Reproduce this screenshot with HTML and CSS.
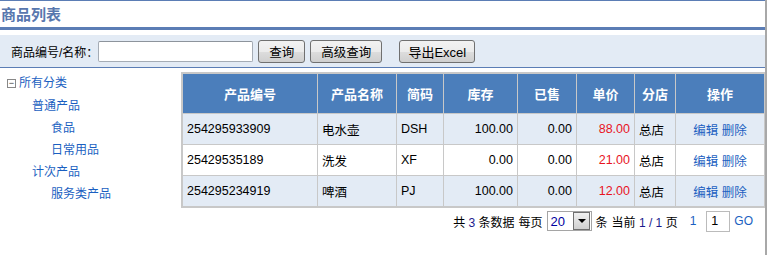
FILE: index.html
```html
<!DOCTYPE html>
<html lang="zh">
<head>
    <meta charset="UTF-8">
    <title>商品列表</title>
    <link rel="stylesheet" href="styles.css">
</head>
<body>
<div class="page">
    <div class="title-bar">
        <h1>商品列表</h1>
    </div>

    <div class="toolbar">
        <label for="keyword">商品编号/名称：</label>
        <input id="keyword" type="text">
        <button>查询</button>
        <button>高级查询</button>
        <button class="export">导出Excel</button>
    </div>

    <div class="content">
        <ul class="tree">
            <li class="root"><span class="toggle">−</span><a href="#">所有分类</a></li>
            <li class="lv1"><a href="#">普通产品</a></li>
            <li class="lv2"><a href="#">食品</a></li>
            <li class="lv2"><a href="#">日常用品</a></li>
            <li class="lv1"><a href="#">计次产品</a></li>
            <li class="lv2"><a href="#">服务类产品</a></li>
        </ul>

        <div class="main">
            <table class="grid">
                <thead>
                    <tr>
                        <th class="c-no">产品编号</th>
                        <th class="c-name">产品名称</th>
                        <th class="c-code">简码</th>
                        <th class="c-stock">库存</th>
                        <th class="c-sold">已售</th>
                        <th class="c-price">单价</th>
                        <th class="c-shop">分店</th>
                        <th class="c-op">操作</th>
                    </tr>
                </thead>
                <tbody>
                    <tr>
                        <td>254295933909</td>
                        <td>电水壶</td>
                        <td>DSH</td>
                        <td class="num">100.00</td>
                        <td class="num">0.00</td>
                        <td class="num price">88.00</td>
                        <td>总店</td>
                        <td class="ops"><a href="#">编辑</a> <a href="#">删除</a></td>
                    </tr>
                    <tr>
                        <td>25429535189</td>
                        <td>洗发</td>
                        <td>XF</td>
                        <td class="num">0.00</td>
                        <td class="num">0.00</td>
                        <td class="num price">21.00</td>
                        <td>总店</td>
                        <td class="ops"><a href="#">编辑</a> <a href="#">删除</a></td>
                    </tr>
                    <tr>
                        <td>254295234919</td>
                        <td>啤酒</td>
                        <td>PJ</td>
                        <td class="num">100.00</td>
                        <td class="num">0.00</td>
                        <td class="num price">12.00</td>
                        <td>总店</td>
                        <td class="ops"><a href="#">编辑</a> <a href="#">删除</a></td>
                    </tr>
                </tbody>
            </table>

            <div class="pager">
                <span>共 <b>3</b> 条数据</span>
                <span>每页</span>
                <span class="select"><span class="val">20</span><span class="arrow"></span></span>
                <span>条</span>
                <span>当前 <b>1 / 1</b> 页</span>
                <a href="#" class="pg">1</a>
                <input class="goto" type="text" value="1">
                <a href="#" class="go">GO</a>
            </div>
        </div>
    </div>
</div>
</body>
</html>
```

FILE: styles.css
```css
body {
    margin: 0;
    font-family: "Liberation Sans", "Noto Sans CJK SC", sans-serif;
    font-size: 12px;
    color: #000;
    background: #fff;
}

.page {
    width: 765px;
    height: 255px;
    border-right: 2px solid #a8a8a8;
}

.title-bar {
    border-top: 1px solid #5b7db5;
    border-bottom: 3px solid #5b7db5;
    height: 26px;
}

h1 {
    margin: 0;
    padding: 5px 0 0 1px;
    font-size: 15px;
    line-height: 17px;
    color: #5877ae;
    font-weight: bold;
}

.toolbar {
    margin-top: 5px;
    height: 32px;
    background: #e3ebf5;
    border-bottom: 1px solid #5b7db5;
    display: flex;
    align-items: center;
    padding-left: 11px;
}

.toolbar input {
    width: 155px;
    height: 21px;
    box-sizing: border-box;
    border: 1px solid #a5acb5;
    border-top-color: #8d949c;
    border-radius: 2px;
    margin: 0 5px 0 0;
    padding: 0 3px;
}

.toolbar button {
    height: 23px;
    padding: 0 10px;
    margin-right: 5px;
    font-family: inherit;
    font-size: 12.5px;
    border: 1px solid #707070;
    border-radius: 3px;
    background: linear-gradient(#f2f2f2, #ebebeb 50%, #dddddd 51%, #cfcfcf);
    color: #000;
}

.toolbar .export {
    margin-left: 12px;
    padding: 0 8px;
    font-size: 13px;
}

.content {
    display: flex;
    padding-top: 4px;
}

.tree {
    list-style: none;
    margin: 0;
    padding: 4px 0 0 7px;
    width: 174px;
}

.tree li {
    height: 22px;
    line-height: 14px;
}

.tree li.root {
    height: 23px;
}

.tree a {
    color: #1b5fc1;
    text-decoration: none;
}

.toggle {
    display: inline-block;
    width: 7px;
    height: 7px;
    border: 1px solid #888;
    font-size: 9px;
    line-height: 6px;
    text-align: center;
    color: #333;
    margin-right: 3px;
    vertical-align: 1px;
}

.lv1 { padding-left: 25px; }
.lv2 { padding-left: 44px; }

.main {
    width: 584px;
}

.grid {
    width: 100%;
    border-collapse: collapse;
    border: 2px solid #c8c8c8;
    border-right-width: 1px;
}

.grid th,
.grid td {
    border: 1px solid #c8c8c8;
    padding: 0 4px;
    white-space: nowrap;
}

.grid th {
    background: #4b7ebb;
    color: #fff;
    height: 39px;
    font-weight: bold;
    font-size: 13px;
}

.grid td {
    height: 30px;
    font-size: 12.5px;
}

.grid tbody tr:nth-child(odd) td {
    background: #e3ebf5;
}

.c-no { width: 126px; }
.c-name { width: 70px; }
.c-code { width: 38px; }
.c-stock { width: 65px; }
.c-sold { width: 50px; }
.c-price { width: 49px; }
.c-shop { width: 32px; }

.num { text-align: right; }
.price { color: #e8141e; }

.ops {
    text-align: center;
}

.ops a {
    color: #1b5fc1;
    text-decoration: none;
}

.pager {
    display: flex;
    justify-content: flex-end;
    align-items: center;
    gap: 4px;
    padding: 2px 12px 0 0;
    height: 22px;
}

.pager b {
    font-weight: normal;
    color: #1a1a8c;
}

.select {
    display: inline-flex;
    align-items: center;
    height: 20px;
    border: 1px solid #a5a5a5;
    box-sizing: border-box;
    width: 45px;
}

.select .val {
    flex: 1;
    padding-left: 3px;
    color: #0000a0;
    font-size: 13px;
}

.select .arrow {
    width: 15px;
    height: 16px;
    border: 1px solid #707070;
    margin-right: 1px;
    background: linear-gradient(#f0f0f0, #d0d0d0);
    position: relative;
}

.select .arrow::after {
    content: "";
    position: absolute;
    left: 4px;
    top: 6px;
    border-left: 4px solid transparent;
    border-right: 4px solid transparent;
    border-top: 4px solid #000;
}

.pg, .go {
    color: #1b5fc1;
    text-decoration: none;
}

.pg { margin: 0 6px 0 8px; }

.goto {
    width: 24px;
    height: 21px;
    box-sizing: border-box;
    border: 1px solid #bbb;
    padding: 0 4px;
    font-size: 12.5px;
    font-family: inherit;
}
```
